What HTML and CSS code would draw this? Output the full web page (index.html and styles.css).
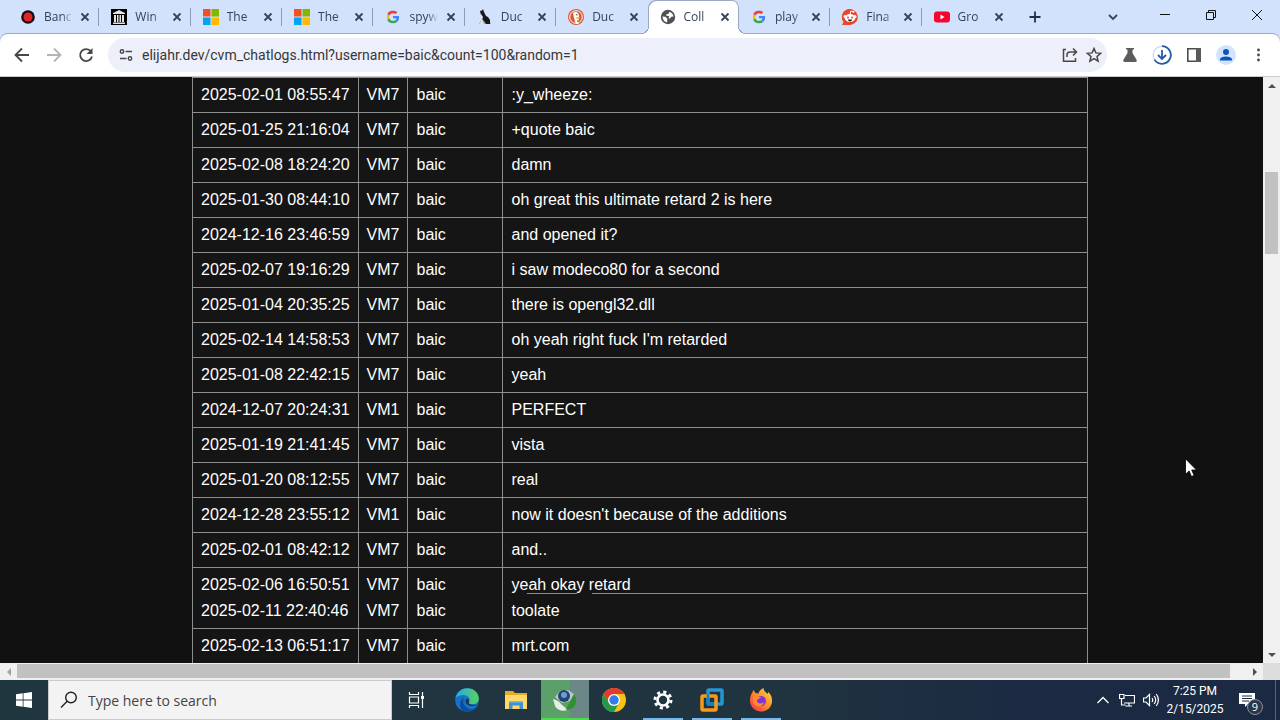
FILE: index.html
```html
<!DOCTYPE html>
<html lang="en">
<head>
  <meta charset="UTF-8">
  <meta name="viewport" content="width=device-width, initial-scale=1.0">
  <title>CollabVM chat logs</title>
  <link rel="stylesheet" href="styles.css">
</head>
<body>
  <!-- Shared icons -->
  <svg class="defs" width="0" height="0" aria-hidden="true">
    <symbol id="x" viewBox="0 0 16 16"><path d="M4.500 4.500l7 7M11.500 4.500l-7 7" fill="none" stroke="#34435c" stroke-width="1.800"/></symbol>
    <symbol id="ms" viewBox="0 0 16 16"><path fill="#f25022" d="M0 0h7.500v7.500H0z"/><path fill="#7fba00" d="M8.500 0H16v7.500H8.500z"/><path fill="#00a4ef" d="M0 8.500h7.500V16H0z"/><path fill="#ffb900" d="M8.500 8.500H16V16H8.500z"/></symbol>
    <symbol id="google" viewBox="0 0 48 48">
      <path fill="#ea4335" d="M24 9.500c3.500 0 6.700 1.200 9.200 3.600l6.900-6.900C35.900 2.400 30.500 0 24 0 14.600 0 6.500 5.400 2.600 13.200l8 6.200C12.400 13.700 17.700 9.500 24 9.500z"/>
      <path fill="#4285f4" d="M47 24.600c0-1.600-.2-3.100-.4-4.600H24v9h12.900c-.6 3-2.200 5.500-4.700 7.200l7.700 6C44.400 38 47 32 47 24.600z"/>
      <path fill="#fbbc05" d="M10.500 28.600c-.5-1.500-.8-3-.8-4.600s.3-3.100.8-4.600l-8-6.200C.900 16.500 0 20.100 0 24s.9 7.500 2.600 10.800z"/>
      <path fill="#34a853" d="M24 48c6.500 0 11.900-2.100 15.900-5.800l-7.700-6c-2.200 1.500-4.900 2.300-8.200 2.300-6.300 0-11.600-4.200-13.500-9.900l-8 6.200C6.500 42.600 14.600 48 24 48z"/>
    </symbol>
  </svg>

  <!-- Tab strip -->
  <header class="tab-strip">
    <div class="tabs">
      <div class="tab">
        <button class="tab-label"><svg class="favicon" viewBox="0 0 16 16"><circle cx="8" cy="8" r="6.800" fill="#160b10"/><circle cx="8" cy="8" r="4.500" fill="#e02526"/></svg><span>Banc</span></button>
        <button class="tab-close" aria-label="Close"><svg><use href="#x"/></svg></button>
      </div>
      <div class="tab">
        <button class="tab-label"><svg class="favicon" viewBox="0 0 16 16"><path d="M0 0h16v16H0z" fill="#000"/><path d="M2 4l6-3 6 3v1H2zM3 6h2v7H3zM6 6h1.500v7H6zM8.500 6H10v7H8.500zM11 6h2v7h-2zM2 13.500h12V15H2z" fill="#e5e5e5"/></svg><span>Win</span></button>
        <button class="tab-close" aria-label="Close"><svg><use href="#x"/></svg></button>
      </div>
      <div class="tab">
        <button class="tab-label"><svg class="favicon"><use href="#ms"/></svg><span>The</span></button>
        <button class="tab-close" aria-label="Close"><svg><use href="#x"/></svg></button>
      </div>
      <div class="tab">
        <button class="tab-label"><svg class="favicon"><use href="#ms"/></svg><span>The</span></button>
        <button class="tab-close" aria-label="Close"><svg><use href="#x"/></svg></button>
      </div>
      <div class="tab">
        <button class="tab-label"><svg class="favicon" viewBox="-6 -6 60 60"><use href="#google" width="48" height="48"/></svg><span>spyw</span></button>
        <button class="tab-close" aria-label="Close"><svg><use href="#x"/></svg></button>
      </div>
      <div class="tab">
        <button class="tab-label"><svg class="favicon" viewBox="0 0 16 16"><path d="M2 15l2-4 8-1 2 5z" fill="#a9aca6"/><path d="M3 2l2-.5L6 0l1 3 2 4 2 1 2 3v4H9l-2-3-2-2z" fill="#16181c"/><path d="M4 5l2 3-1 3 2 4H3l1-4z" fill="#e4e4e0"/></svg><span>Duc</span></button>
        <button class="tab-close" aria-label="Close"><svg><use href="#x"/></svg></button>
      </div>
      <div class="tab">
        <button class="tab-label"><svg class="favicon" viewBox="0 0 16 16"><circle cx="8" cy="8" r="8" fill="#de5833"/><circle cx="8" cy="8" r="6.300" fill="none" stroke="#fff"/><path d="M5 4c2-2 6-1 6 3l-.5 2 .5 5.500-3 .5-2-6z" fill="#fff"/><path d="M8 8.500l4-.8-1 1.500-3 .6z" fill="#fdb515"/><circle cx="8.800" cy="5.800" r=".8" fill="#2d4f8e"/><path d="M9 11l2.500 1v1.500L9 13z" fill="#4cba3c"/></svg><span>Duc</span></button>
        <button class="tab-close" aria-label="Close"><svg><use href="#x"/></svg></button>
      </div>
      <div class="tab active">
        <button class="tab-label"><svg class="favicon" viewBox="0 0 16 16"><circle cx="8" cy="8" r="7.200" fill="#4d5156"/><path d="M2.500 7.500l3 .3 1.800 2-.2 3.700C4.500 13 2.500 10.800 2.500 7.500zM9.500 2.800c2 .7 3.600 2.300 4 4.700l-2.200.2-1.500 2-1.300-.7.800-2-2.800-.2-.5-1.300 2.500-.8z" fill="#fff"/></svg><span>Coll</span></button>
        <button class="tab-close" aria-label="Close"><svg><use href="#x"/></svg></button>
      </div>
      <div class="tab">
        <button class="tab-label"><svg class="favicon" viewBox="-6 -6 60 60"><use href="#google" width="48" height="48"/></svg><span>play</span></button>
        <button class="tab-close" aria-label="Close"><svg><use href="#x"/></svg></button>
      </div>
      <div class="tab">
        <button class="tab-label"><svg class="favicon" viewBox="0 0 16 16"><path d="M0 16l1.500-3A8 8 0 1 1 8 16z" fill="#e8472c"/><circle cx="3" cy="7.500" r="1.500" fill="#fff"/><circle cx="13" cy="7.500" r="1.500" fill="#fff"/><ellipse cx="8" cy="9" rx="5.300" ry="4" fill="#fff"/><path d="M8 5l1-3 2 .5" fill="none" stroke="#fff"/><circle cx="11.500" cy="2.800" r="1" fill="#fff"/><circle cx="6" cy="8.500" r="1" fill="#e8472c"/><circle cx="10" cy="8.500" r="1" fill="#e8472c"/><path d="M6 10.500h4a2 2 0 0 1-4 0z" fill="#222"/></svg><span>Fina</span></button>
        <button class="tab-close" aria-label="Close"><svg><use href="#x"/></svg></button>
      </div>
      <div class="tab">
        <button class="tab-label"><svg class="favicon" viewBox="0 0 16 16"><rect y="2.500" width="16" height="11" rx="3" fill="#f5062f"/><path d="M6.500 5.500l4 2.500-4 2.500z" fill="#fff"/></svg><span>Gro</span></button>
        <button class="tab-close" aria-label="Close"><svg><use href="#x"/></svg></button>
      </div>
    </div>
    <button class="new-tab" aria-label="New tab"><svg width="16" height="16" viewBox="0 0 16 16"><path d="M8 2.500v11M2.500 8h11" stroke="#1f3048" stroke-width="1.800"/></svg></button>
    <div class="window-buttons">
      <button aria-label="Search tabs"><svg width="16" height="16" viewBox="0 0 16 16"><path d="M4 6l4 4 4-4" fill="none" stroke="#34435c" stroke-width="1.800"/></svg></button>
      <button aria-label="Minimize"><svg width="12" height="12" viewBox="0 0 12 12"><path d="M1 5.500h10" stroke="#111"/></svg></button>
      <button aria-label="Restore"><svg width="12" height="12" viewBox="0 0 12 12"><path d="M1.500 3.500h7v7h-7zM3.500 3.500v-2h7v7h-2" fill="none" stroke="#111"/></svg></button>
      <button aria-label="Close window"><svg width="12" height="12" viewBox="0 0 12 12"><path d="M1 1l10 10M11 1L1 11" stroke="#111"/></svg></button>
    </div>
  </header>

  <!-- Toolbar -->
  <nav class="toolbar">
    <button aria-label="Back"><svg width="16" height="16" viewBox="0 0 16 16"><path d="M15 8H2M8 1.500L1.500 8 8 14.500" fill="none" stroke="#474747" stroke-width="1.800"/></svg></button>
    <button aria-label="Forward"><svg width="16" height="16" viewBox="0 0 16 16"><path d="M1 8h13M8 1.500L14.500 8 8 14.500" fill="none" stroke="#b4b4b4" stroke-width="1.800"/></svg></button>
    <button aria-label="Reload"><svg width="16" height="16" viewBox="0 0 16 16"><path d="M13 4.500A6 6 0 1 0 14 9.500" fill="none" stroke="#474747" stroke-width="1.800"/><path d="M14.500 1v6h-6z" fill="#474747"/></svg></button>
    <div class="omnibox">
      <svg width="14" height="14" viewBox="0 0 14 14"><path d="M6.500 3.500H13M1 10.500h6.500" stroke="#474747" stroke-width="1.500"/><circle cx="3" cy="3.500" r="1.700" fill="none" stroke="#474747" stroke-width="1.400"/><circle cx="11" cy="10.500" r="1.700" fill="none" stroke="#474747" stroke-width="1.400"/></svg>
      <input type="text" aria-label="Address" value="elijahr.dev/cvm_chatlogs.html?username=baic&amp;count=100&amp;random=1">
      <button aria-label="Share"><svg width="16" height="16" viewBox="0 0 16 16"><path d="M4 2.500H1.500v11.700h12V11M5 10V8q0-3 3-3h6M11 1.500L14.500 5 11 8.500" fill="none" stroke="#474747" stroke-width="1.500"/></svg></button>
      <button aria-label="Bookmark"><svg width="16" height="16" viewBox="0 0 16 16"><path d="M8 1.500l1.900 4.400 4.800.4L11 9.500l1.100 4.700L8 11.700l-4.100 2.500L5 9.500 1.300 6.300l4.800-.4z" fill="none" stroke="#474747" stroke-width="1.500"/></svg></button>
    </div>
    <button aria-label="Labs"><svg width="16" height="16" viewBox="0 0 16 16"><path d="M4 1h8v1.500h-1.500V6l4.200 7q.5 2-1.200 2h-11q-1.700 0-1.200-2l4.200-7V2.500H4z" fill="#5c5c5c"/></svg></button>
    <button aria-label="Downloads"><svg width="20" height="20" viewBox="0 0 20 20"><circle cx="10" cy="10" r="8.800" fill="none" stroke="#c9ddf6" stroke-width="1.500"/><path d="M10 1.200a8.800 8.800 0 1 1-7.500 13.400" fill="none" stroke="#255ba5" stroke-width="1.800"/><path d="M10 5v9M6 10l4 4 4-4" fill="none" stroke="#255ba5" stroke-width="1.800"/></svg></button>
    <button aria-label="Side panel"><svg width="16" height="16" viewBox="0 0 16 16"><path d="M1.800 1.800h12.400v12.400H1.800z" fill="none" stroke="#4b4b4b" stroke-width="1.600"/><path d="M10 1h5v14h-5z" fill="#5a5a5a"/></svg></button>
    <button aria-label="Profile"><svg width="20" height="20" viewBox="0 0 20 20"><circle cx="10" cy="10" r="10" fill="#d3e3fd"/><circle cx="10" cy="7" r="3" fill="#0b57b5"/><path d="M4 15.500v-1.500q1-2.500 6-2.500t6 2.500v1.500z" fill="#0b57b5"/></svg></button>
    <button aria-label="Menu"><svg width="16" height="16" viewBox="0 0 16 16"><g fill="#474747"><circle cx="8.500" cy="3" r="1.400"/><circle cx="8.500" cy="8" r="1.400"/><circle cx="8.500" cy="13" r="1.400"/></g></svg></button>
  </nav>

  <!-- Page -->
  <main class="viewport">
    <div class="page">
      <table class="logs">
        <tbody>
          <tr><td>2025-02-01 08:55:47</td><td>VM7</td><td class="user">baic</td><td class="message">:y_wheeze:</td></tr>
          <tr><td>2025-01-25 21:16:04</td><td>VM7</td><td>baic</td><td>+quote baic</td></tr>
          <tr><td>2025-02-08 18:24:20</td><td>VM7</td><td>baic</td><td>damn</td></tr>
          <tr><td>2025-01-30 08:44:10</td><td>VM7</td><td>baic</td><td>oh great this ultimate retard 2 is here</td></tr>
          <tr><td>2024-12-16 23:46:59</td><td>VM7</td><td>baic</td><td>and opened it?</td></tr>
          <tr><td>2025-02-07 19:16:29</td><td>VM7</td><td>baic</td><td>i saw modeco80 for a second</td></tr>
          <tr><td>2025-01-04 20:35:25</td><td>VM7</td><td>baic</td><td>there is opengl32.dll</td></tr>
          <tr><td>2025-02-14 14:58:53</td><td>VM7</td><td>baic</td><td>oh yeah right fuck I'm retarded</td></tr>
          <tr><td>2025-01-08 22:42:15</td><td>VM7</td><td>baic</td><td>yeah</td></tr>
          <tr><td>2024-12-07 20:24:31</td><td>VM1</td><td>baic</td><td>PERFECT</td></tr>
          <tr><td>2025-01-19 21:41:45</td><td>VM7</td><td>baic</td><td>vista</td></tr>
          <tr><td>2025-01-20 08:12:55</td><td>VM7</td><td>baic</td><td>real</td></tr>
          <tr><td>2024-12-28 23:55:12</td><td>VM1</td><td>baic</td><td>now it doesn't because of the additions</td></tr>
          <tr><td>2025-02-01 08:42:12</td><td>VM7</td><td>baic</td><td>and..</td></tr>
          <tr class="torn"><td>2025-02-06 16:50:51</td><td>VM7</td><td>baic</td><td class="torn-edge">yeah okay retard</td></tr>
          <tr class="after-torn"><td>2025-02-11 22:40:46</td><td>VM7</td><td>baic</td><td>toolate</td></tr>
          <tr><td>2025-02-13 06:51:17</td><td>VM7</td><td>baic</td><td>mrt.com</td></tr>
        </tbody>
      </table>
    </div>
    <div class="scroll-y">
      <button aria-label="Scroll up"><svg width="8" height="4" viewBox="0 0 8 4"><path d="M0 4l4-4 4 4z" fill="#505050"/></svg></button>
      <div class="track"><span class="before"></span><span class="thumb"></span><span class="after"></span></div>
      <button aria-label="Scroll down"><svg width="8" height="4" viewBox="0 0 8 4"><path d="M0 0l4 4 4-4z" fill="#505050"/></svg></button>
    </div>
    <div class="scroll-x">
      <button aria-label="Scroll left"><svg width="4" height="8" viewBox="0 0 4 8"><path d="M4 0L0 4l4 4z" fill="#a3a3a3"/></svg></button>
      <div class="track"><span class="thumb"></span><span class="after"></span></div>
      <button aria-label="Scroll right"><svg width="4" height="8" viewBox="0 0 4 8"><path d="M0 0l4 4-4 4z" fill="#505050"/></svg></button>
    </div>
    <div class="corner"></div>
    <svg class="cursor" width="13" height="20" viewBox="0 0 13 20"><path d="M.500.800v15.500l3.600-3.400 2.400 5.600 2.600-1.100-2.400-5.400h4.800z" fill="#fff" stroke="#000" stroke-width=".8"/></svg>
  </main>

  <!-- Taskbar -->
  <footer class="taskbar">
    <button class="start" aria-label="Start"><svg width="16" height="16" viewBox="0 0 16 16"><path d="M0 2.300l6.700-1v6.300H0zM7.500 1.200L16 0v7.600H7.500zM0 8.400h6.700v6.300L0 13.800zM7.500 8.400H16V16l-8.500-1.200z" fill="#fff"/></svg></button>
    <label class="search">
      <svg width="18" height="18" viewBox="0 0 18 18"><circle cx="11" cy="6.500" r="5.300" fill="none" stroke="#222" stroke-width="1.400"/><path d="M7.200 10.300L1 16.500" stroke="#222" stroke-width="1.400"/></svg>
      <input type="text" aria-label="Search" placeholder="Type here to search">
    </label>
    <div class="apps">
      <button aria-label="Task view"><svg width="18" height="18" viewBox="0 0 18 18"><path d="M2.500 1v2.500h9V1M2.500 17v-2.500h9V17M2.500 6h9v6h-9zM15.500 1v16" fill="none" stroke="#fff" stroke-width="1.200"/><path d="M14 5h3v3h-3z" fill="#fff"/></svg></button>
      <button aria-label="Edge"><svg width="24" height="24" viewBox="0 0 24 24"><defs><linearGradient id="edge-top"><stop stop-color="#2ba8e8"/><stop offset="1" stop-color="#55d35b"/></linearGradient></defs><circle cx="12" cy="12" r="11.800" fill="#1374cb"/><path d="M.400 10C2 4 6.500.200 12.200.200c7 0 11.600 5 11.600 10 0 4-3 6-6.300 6-2.500 0-4-.8-3.500-2 1.700-3.300-.9-7.200-5-7.200C4.800 7 1.500 8.500.400 10z" fill="url(#edge-top)"/><path d="M9.500 9c-3 3.500-1.200 10.500 6 12.200 2.500.3 5-1 6.300-2.700-2.800 4-8 6-12.600 5C3.500 21 3.500 12 9.500 9z" fill="#0c4c9a"/><path d="M13 10.500c-2.500.3-3.300 3-1.500 5.200 2.500 3 7.300 3 11 .8-3 .6-8.800.5-8.800-1.600 0-1 1.300-2.300-.7-4.400z" fill="#203840"/></svg></button>
      <button aria-label="File Explorer"><svg width="24" height="20" viewBox="0 0 24 20"><path d="M1 1h8l2 2h12v16H1z" fill="#e9a928"/><path d="M1 5h22v14H1z" fill="#ffd868"/><path d="M5 19v-7h14v7h-3.500v-3.500h-7V19z" fill="#3f91d6"/><path d="M5 11h14v1.500H5z" fill="#79bdea"/></svg></button>
      <button class="current" aria-label="Bandwidth monitor"><svg width="24" height="24" viewBox="0 0 24 24"><path d="M0 11c3 1 6 2 8 5l7 6c-5 2-11 0-13-4z" fill="#e7ede2"/><path d="M20 5c5 5 4 13-2 16l-5 1c1-5 5-7 7-17z" fill="#31912f"/><path d="M2 9l5-6 8-1 6 4-4 7-8 2z" fill="#b9c6d4"/><circle cx="11" cy="8" r="6" fill="#23456f"/><circle cx="11" cy="7" r="3" fill="#6c9dd0"/></svg></button>
      <button aria-label="Chrome"><svg width="24" height="24" viewBox="0 0 24 24"><circle cx="12" cy="12" r="12" fill="#fbc116"/><path d="M1.600 6A12 12 0 0 1 22.400 6H12L7 15z" fill="#e33b2e"/><path d="M1.600 6A12 12 0 0 0 12 24l5-9-5 2-5-2z" fill="#229a49"/><circle cx="12" cy="12" r="6" fill="#fff"/><circle cx="12" cy="12" r="4.700" fill="#347de8"/></svg></button>
      <button class="open" aria-label="Settings"><svg width="20" height="20" viewBox="0 0 20 20"><circle cx="10" cy="10" r="5.500" fill="none" stroke="#fff" stroke-width="2.600"/><circle cx="10" cy="10" r="8" fill="none" stroke="#fff" stroke-width="3" stroke-dasharray="3.100 3.183"/></svg></button>
      <button class="open" aria-label="VMware"><svg width="24" height="24" viewBox="0 0 24 24"><rect x="8" y="2" width="14" height="14" rx="1" fill="none" stroke="#2297d4" stroke-width="3.500"/><rect x="2" y="8" width="14" height="14" rx="1" fill="none" stroke="#f59a1c" stroke-width="3.500"/><path d="M8 6v8q0 2 2 2h4" fill="none" stroke="#1680bd" stroke-width="2.500"/></svg></button>
      <button class="open" aria-label="Firefox"><svg width="24" height="24" viewBox="0 0 24 24"><defs><linearGradient id="fox" x1="1" y1="0" x2="0" y2="1"><stop stop-color="#ffe13d"/><stop offset=".5" stop-color="#ff8a28"/><stop offset="1" stop-color="#f5245b"/></linearGradient></defs><path d="M3 5l1.500-3 2 3 3 .5C10 3 12 1 14.500 0c0 3 2.500 4 4 6l.8-2c3 3 4 6 3.700 10-.7 6-5.500 9.500-11 9.500S1.500 19.500 1 13.500C.8 10 1.500 7 3 5z" fill="url(#fox)"/><circle cx="12" cy="13" r="5" fill="#8134d6"/><path d="M4 9c3-2 5 0 8 0-1 2-4 1.500-4 4 0 3 5 3 7 1-1 5-8 6-11 1z" fill="#ff8c2a"/></svg></button>
    </div>
    <div class="tray">
      <button aria-label="Hidden icons"><svg width="14" height="14" viewBox="0 0 14 14"><path d="M1.500 10L7 4.500l5.500 5.500" fill="none" stroke="#fff" stroke-width="1.300"/></svg></button>
      <button aria-label="Network"><svg width="16" height="16" viewBox="0 0 16 16"><path d="M6 3.500h9.500v7.500H5M10 11v3M6.500 14h6.500M.500 2.500h4.500v4H.500zM2.500 6.500v6.500h4" fill="none" stroke="#fff" stroke-width="1.200"/></svg></button>
      <button aria-label="Volume"><svg width="16" height="16" viewBox="0 0 16 16"><path d="M.500 6h2.500l3.500-3.500v11L3 10H.500zM9 6q1.500 2 0 4M11.200 4q3 4 0 8M13.300 2q4.200 6 0 12" fill="none" stroke="#fff" stroke-width="1.200"/></svg></button>
      <button class="clock"><span>7:25 PM</span><span>2/15/2025</span></button>
      <button class="notifications" aria-label="Notifications"><svg width="16" height="16" viewBox="0 0 16 16"><path d="M0 1h16v11H9l-3 3v-3H0z" fill="#fff"/><path d="M3 4h10M3 6.500h10M3 9h7" stroke="#1b2b42"/></svg><span class="badge">9</span></button>
      <span class="show-desktop"></span>
    </div>
  </footer>
</body>
</html>
```
FILE: styles.css
```css
* {
  margin: 0;
  padding: 0;
  box-sizing: border-box;
}
body {
  display: flex;
  flex-direction: column;
  height: 100vh;
  overflow: hidden;
  background: #d3e2fc;
  font-family: "Open Sans", "Noto Sans", sans-serif;
  font-size: 12px;
}
button,
input {
  border: none;
  background: none;
  color: inherit;
  font: inherit;
  outline: none;
}
button {
  display: flex;
  align-items: center;
  justify-content: center;
}
svg {
  display: block;
  flex-shrink: 0;
}
.defs {
  position: absolute;
}

/* Tab strip */
.tab-strip {
  display: flex;
  flex-shrink: 0;
  height: 34px;
  padding-left: 8px;
}
.tabs {
  display: flex;
  flex: 0 1 1005px;
  min-width: 0;
}
.tab {
  display: flex;
  flex: 1 1 90px;
  align-items: center;
  min-width: 0;
  padding: 0 6px 0 12px;
  background: linear-gradient(#8b9bb8, #8b9bb8) right center / 1px 18px no-repeat;
  color: #33415a;
}
.tab:last-child,
.tab:has(+ .active) {
  background: none;
}
.tab-label {
  flex: 1;
  justify-content: flex-start;
  gap: 8px;
  min-width: 0;
}
.tab-label span {
  flex: 1;
  height: 20px;
  line-height: 20px;
  text-align: left;
  white-space: nowrap;
  -webkit-mask-image: linear-gradient(90deg, #000 18px, transparent 29px);
  mask-image: linear-gradient(90deg, #000 18px, transparent 29px);
}
.favicon {
  width: 16px;
  height: 16px;
}
.tab-close {
  width: 16px;
}
.tab-close svg {
  width: 16px;
  height: 16px;
}
.tab.active {
  position: relative;
  z-index: 1;
  background: #fff;
  border-radius: 8px 8px 0 0;
  box-shadow: inset 1px 1px #9aa8c2, inset -1px 0 #9aa8c2;
}
/* Curved feet of the active tab */
.tab.active::before,
.tab.active::after {
  content: "";
  position: absolute;
  bottom: 0;
  width: 8px;
  height: 8px;
}
.tab.active::before {
  right: calc(100% - 1px);
  background: radial-gradient(circle at 0 0, #d3e2fc 7px, #9aa8c2 7px, #9aa8c2 8px, #fff 8px);
}
.tab.active::after {
  left: calc(100% - 1px);
  background: radial-gradient(circle at 100% 0, #d3e2fc 7px, #9aa8c2 7px, #9aa8c2 8px, #fff 8px);
}
.new-tab {
  width: 32px;
  margin-left: 6px;
}
.window-buttons {
  display: flex;
  margin-left: auto;
  padding-bottom: 5px;
}
.window-buttons button {
  width: 46px;
}
.window-buttons button:first-child {
  width: 58px;
  padding-top: 4px;
}

/* Toolbar */
.toolbar {
  display: flex;
  flex-shrink: 0;
  align-items: center;
  height: 43px;
  padding: 0 6px;
  background: #fff;
  border-bottom: 1px solid #c9c9cf;
  border-radius: 8px 8px 0 0;
  box-shadow: 0 -1px #9aa8c2;
}
.toolbar button {
  width: 32px;
  height: 32px;
}
.omnibox {
  display: flex;
  flex: 1;
  align-items: center;
  min-width: 0;
  height: 34px;
  margin: 0 7px 0 6px;
  padding: 0 1px 0 11px;
  border-radius: 17px;
  background: #edf0fa;
}
.omnibox input {
  flex: 1;
  min-width: 0;
  padding-left: 9px;
  color: #36373b;
  font-family: Roboto, "Open Sans", sans-serif;
  font-size: 14px;
}
.omnibox button {
  width: 24px;
}

/* Page and its scrollbars */
.viewport {
  position: relative;
  display: grid;
  flex: 1;
  grid-template-columns: minmax(0, 1fr) 17px;
  grid-template-rows: minmax(0, 1fr) 17px;
  min-height: 0;
  background: #f0f0f0;
}
.page {
  overflow: hidden;
  background: #111;
  color: #fff;
  font-family: "Liberation Sans", Arial, sans-serif;
  font-size: 16px;
  line-height: 18px;
}
.logs {
  width: 70vw;
  margin-left: 15vw;
  border-collapse: collapse;
  background: #151515;
}
.logs td {
  padding: 8px;
  border: 1px solid #8c8f8d;
  white-space: nowrap;
}
.logs .user {
  min-width: 95px;
}
.logs .message {
  width: 100%;
}
.logs .torn td {
  padding-bottom: 0;
  border-bottom: none;
}
.logs .after-torn td {
  border-top: none;
}
.logs .torn-edge {
  background: linear-gradient(90deg, transparent 24px, #8c8f8d 24px, #8c8f8d 74px, transparent 74px, transparent 89px, #8c8f8d 89px) left bottom / 100% 1px no-repeat;
}
.scroll-y,
.scroll-x,
.track {
  display: flex;
}
.scroll-y,
.scroll-y .track {
  flex-direction: column;
}
.scroll-y button,
.scroll-x button {
  width: 17px;
  height: 17px;
}
.track {
  flex: 1;
}
.scroll-y .track {
  padding: 0 2px;
}
.scroll-x .track {
  padding: 1px 0 2px;
}
.thumb {
  background: #c1c1c1;
}
.scroll-y .before {
  flex: 78;
}
.scroll-y .thumb {
  flex: 82;
}
.scroll-y .after {
  flex: 392;
}
.scroll-x .thumb {
  flex: 1213;
}
.scroll-x .after {
  flex: 16;
}
.corner {
  background: #dcdcdc;
}
.cursor {
  position: absolute;
  top: 381px;
  left: 1185px;
}

/* Taskbar */
.taskbar {
  display: flex;
  flex-shrink: 0;
  height: 40px;
  background: linear-gradient(90deg, #20363f, #20343f 60%, #1b2a42 80%);
  color: #fff;
}
.start {
  width: 48px;
}
.search {
  display: flex;
  flex: 0 1 344px;
  align-items: center;
  min-width: 0;
  padding-left: 11px;
  border: 1px solid #c8cccd;
  background: #f3f3f3;
}
.search input {
  flex: 1;
  min-width: 0;
  padding-left: 10px;
  font-size: 14px;
}
.search input::placeholder {
  color: #444;
  opacity: 1;
}
.apps {
  display: flex;
  gap: 1px;
}
.apps button {
  width: 48px;
}
.apps button:first-child {
  margin-right: 2px;
}
.apps .current {
  background: linear-gradient(90deg, #5b9f69 60%, #6c8886 60%);
  box-shadow: inset 0 -2px #4fdc4c;
}
.apps .open {
  background: linear-gradient(#76b9ed, #76b9ed) center bottom / 40px 2px no-repeat;
}
.tray {
  display: flex;
  margin-left: auto;
}
.tray button {
  width: 24px;
}
.tray .clock {
  flex-direction: column;
  width: 64px;
  font-family: Roboto, "Open Sans", sans-serif;
  line-height: 18px;
}
.tray .notifications {
  position: relative;
  width: 40px;
}
.badge {
  position: absolute;
  top: 19px;
  left: 20px;
  width: 16px;
  height: 16px;
  border: 1px solid #8a929e;
  border-radius: 50%;
  background: #2b3648;
  font-size: 11px;
  line-height: 14px;
}
.show-desktop {
  width: 5px;
  margin-left: 8px;
  border-left: 1px solid #56657b;
}
```
